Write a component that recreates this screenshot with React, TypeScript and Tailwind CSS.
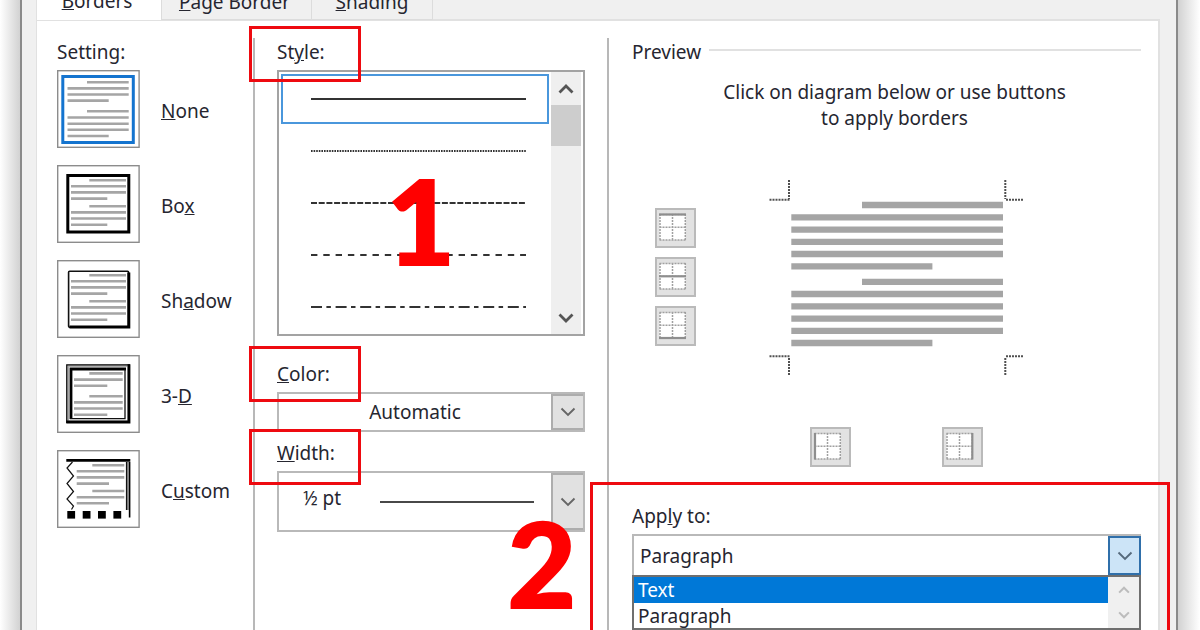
import type { ReactNode } from "react";

const RED = "border-[#ee0a10]";

// [kind, y] - R: indented, F: full width, L: short last line
type Line = ["R" | "F" | "L", number];

const noneLines: Line[] = [
  ["R", 12.3], ["F", 18.4], ["F", 24.5], ["L", 30.6], ["R", 41.3],
  ["F", 47.5], ["F", 53.7], ["F", 59.8], ["L", 66],
];
const boxLines: Line[] = [
  ["R", 15.2], ["F", 21.3], ["F", 27.4], ["L", 33.6],
  ["R", 41.3], ["F", 47.4], ["F", 53.5], ["L", 59.7],
];
const threeDLines: Line[] = [
  ["R", 18.4], ["F", 24.6], ["L", 30.7], ["R", 41.3],
  ["F", 47.4], ["F", 53.5], ["L", 59.7],
];
const customLines: Line[] = [
  ["R", 15.2], ["F", 21.3], ["F", 27.4], ["L", 33.6],
  ["R", 41], ["F", 47.2], ["L", 53.3],
];
const previewLines: Line[] = [
  ["R", 25], ["F", 37.3], ["F", 49.6], ["F", 61.8], ["F", 74], ["L", 86.3],
  ["R", 101.8], ["F", 114], ["F", 126.3], ["F", 138.6], ["F", 150.8], ["L", 163],
];

function TextLines({
  lines, left, right, indent, end, width,
}: {
  lines: Line[]; left: number; right: number; indent: number; end: number; width: number;
}) {
  return (
    <g stroke="#a5a5a5" strokeWidth={width}>
      {lines.map(([kind, y]) => (
        <line
          key={y}
          x1={kind === "R" ? indent : left}
          x2={kind === "L" ? end : right}
          y1={y}
          y2={y}
        />
      ))}
    </g>
  );
}

const settings: { id: string; label: ReactNode; art: ReactNode }[] = [
  {
    id: "none",
    label: <><u>N</u>one</>,
    art: (
      <>
        <rect x="5.8" y="6.5" width="70.5" height="66" fill="none" stroke="#1474cf" strokeWidth="3" />
        <TextLines lines={noneLines} left={10.5} right={71.7} indent={30} end={51.7} width={2.6} />
      </>
    ),
  },
  {
    id: "box",
    label: <>Bo<u>x</u></>,
    art: (
      <>
        <rect x="10.8" y="10.5" width="61" height="56.5" fill="none" stroke="#000" strokeWidth="3" />
        <TextLines lines={boxLines} left={14} right={69} indent={32.3} end={50.3} width={2.6} />
      </>
    ),
  },
  {
    id: "shadow",
    label: <>Sh<u>a</u>dow</>,
    art: (
      <>
        <rect x="11.6" y="11.2" width="60" height="56" rx="1" fill="none" stroke="#111" strokeWidth="1.6" />
        <path d="M12.5 67 H71.8 V12.5" fill="none" stroke="#000" strokeWidth="3" />
        <TextLines lines={boxLines} left={14} right={69} indent={32.3} end={50.3} width={2.6} />
      </>
    ),
  },
  {
    id: "three-d",
    label: <>3-<u>D</u></>,
    art: (
      <>
        <rect x="11.4" y="11.1" width="59.6" height="55.4" fill="none" stroke="#a8a8a8" strokeWidth="1.6" />
        <path d="M9.8 68 V9.8 H73" fill="none" stroke="#000" strokeWidth="1.3" />
        <path d="M9.3 67 H72 V9.3" fill="none" stroke="#000" strokeWidth="2.8" />
        <path d="M14 64 V14 H69" fill="none" stroke="#000" strokeWidth="2.8" />
        <path d="M13 63.7 H68 V14" fill="none" stroke="#111" strokeWidth="1.3" />
        <TextLines lines={threeDLines} left={17} right={65.7} indent={32.3} end={50.3} width={2.6} />
      </>
    ),
  },
  {
    id: "custom",
    label: <>C<u>u</u>stom</>,
    art: (
      <>
        <path d="M9.3 10.4 H73.3" stroke="#000" strokeWidth="2.8" />
        <path
          d="M15.5 12 L10 18 L16.5 26 L10 33.5 L16.5 41.5 L10 49 L16.5 56 L14.5 59.5"
          fill="none"
          stroke="#111"
          strokeWidth="1.2"
        />
        <path d="M71 12 V60" stroke="#a8a8a8" strokeWidth="2" />
        <path d="M69.6 12 V60" stroke="#111" strokeWidth="1.4" />
        <path d="M72.6 12 V67.5" stroke="#000" strokeWidth="1.6" />
        {[10.3, 25.7, 41, 56.4].map((x) => (
          <rect key={x} x={x} y="61" width="7.8" height="7.6" fill="#000" />
        ))}
        <TextLines lines={customLines} left={19.7} right={67.3} indent={35.3} end={52} width={2.6} />
      </>
    ),
  },
];

const lineStyles = [
  { name: "Single", dash: undefined },
  { name: "Dotted", dash: "1.6 1" },
  { name: "Dashed, small gap", dash: "6 1.7" },
  { name: "Dashed, large gap", dash: "6.4 5.9" },
  { name: "Dash dot", dash: "11 4.4 4.5 4.7" },
];

function Chevron({ up = false, bold = false, className }: { up?: boolean; bold?: boolean; className: string }) {
  return (
    <svg width="16" height="10" viewBox="0 0 16 10" className={className} aria-hidden="true">
      <path
        d={up ? "M1.5 8.5 L8 2 L14.5 8.5" : "M1.5 1.5 L8 8 L14.5 1.5"}
        fill="none"
        stroke="currentColor"
        strokeWidth={bold ? 2.8 : 1.9}
      />
    </svg>
  );
}

// Label with the red annotation frame around it
function MarkedLabel({
  htmlFor, id, frame, children,
}: {
  htmlFor?: string; id?: string; frame: string; children: ReactNode;
}) {
  return (
    <div className="relative mb-1">
      <label id={id} htmlFor={htmlFor}>{children}</label>
      <span className={`pointer-events-none absolute -left-7 z-10 h-14 w-28 border-[3px] ${RED} ${frame}`} />
    </div>
  );
}

type Side = "top" | "middle" | "bottom" | "left" | "right";

const sidePaths: Record<Side, string> = {
  top: "M4 6.5 H31",
  middle: "M4 19.3 H31",
  bottom: "M4 32 H31",
  left: "M5 6 V32.5",
  right: "M30.3 6 V32.5",
};

function BorderButton({ side }: { side: Side }) {
  return (
    <button
      type="button"
      aria-label={`${side} border`}
      className="block h-10 w-[41px] border-2 border-[#bababa] bg-[#e2e2e2]"
    >
      <svg width="41" height="40" viewBox="0 0 41 40" className="-m-[2px] max-w-none">
        <rect x="4.5" y="6.5" width="26" height="25.5" fill="#fff" />
        <path
          d="M4.5 6.5 H31 M4.5 19.3 H31 M4.5 32 H31 M5 6 V32.5 M17.5 6 V32.5 M30.3 6 V32.5"
          stroke="#a0a0a0"
          strokeWidth="1.5"
          strokeDasharray="2 1"
        />
        <path d={sidePaths[side]} stroke="#8e8e8e" strokeWidth="2.2" />
      </svg>
    </button>
  );
}

function PreviewDiagram() {
  return (
    <svg width="255" height="196" viewBox="0 0 255 196" role="img" aria-label="Border preview">
      <path
        d="M0.5 19.7 H21 M20 0 V19 M236.3 0 V19 M237 19.7 H254.5 M0.5 176.3 H21 M20 178 V196 M237 176.3 H254.5 M236.3 178 V196"
        stroke="#505050"
        strokeWidth="2"
        strokeDasharray="2 1"
      />
      <TextLines lines={previewLines} left={22.3} right={234} indent={93} end={163.4} width={6.3} />
    </svg>
  );
}

export default function App() {
  return (
    <main className="flex h-screen overflow-hidden bg-white font-['Noto_Sans','Open_Sans',sans-serif] text-[19px] leading-7 text-[#262630]">
      <div className="w-5 shrink-0 bg-linear-to-r from-white to-[#d2d2d2]" />

      <div className="flex min-w-0 flex-1 flex-col border-x-2 border-[#8a8a8a] bg-[#f0f0f0] pl-3.5 pr-4">
        <div role="tablist" className="z-10 -mt-4 -mb-px flex h-9 shrink-0">
          <button type="button" role="tab" aria-selected="true" className="w-[125px] border-l border-[#e1e1e1] bg-white pr-1 pb-0.5">
            <u>B</u>orders
          </button>
          <button type="button" role="tab" aria-selected="false" className="w-[151px] border-x border-b border-[#dcdcdc] pr-1">
            <u>P</u>age Border
          </button>
          <button type="button" role="tab" aria-selected="false" className="w-[121px] border-r border-b border-[#dcdcdc]">
            <u>S</u>hading
          </button>
        </div>

        <div className="flex flex-1 border-2 border-b-0 border-l border-[#e1e1e1] bg-white pt-[17px]">
          <section className="w-[216px] shrink-0 pl-5">
            <h2 className="mb-1">Setting:</h2>
            <div className="flex flex-col gap-[17px]">
              {settings.map((s) => (
                <button key={s.id} type="button" className="flex items-center gap-[21px] text-left">
                  <svg width="83" height="78" viewBox="0 0 83 78" aria-hidden="true">
                    <rect x="0.7" y="0.7" width="81.4" height="76.6" fill="#fff" stroke="#8c8c8c" strokeWidth="1.4" />
                    {s.art}
                  </svg>
                  <span className="pt-1">{s.label}</span>
                </button>
              ))}
            </div>
          </section>

          <section className="relative w-[354px] shrink-0 border-l-2 border-[#b8b8b8] px-[22px]">
            <MarkedLabel id="style-label" frame="-top-3">St<u>y</u>le:</MarkedLabel>
            <div className="flex h-[266px] border-2 border-[#a3a3a3]">
              <ul role="listbox" aria-labelledby="style-label" className="flex-1">
                {lineStyles.map((style, i) => (
                  <li key={style.name} role="option" aria-selected={i === 0} aria-label={style.name} className="h-[52px] p-0.5">
                    <div
                      className={
                        i === 0
                          ? "flex h-[50px] items-center border-2 border-[#4a97dc] pl-7 pr-[21px]"
                          : "flex h-[50px] items-center pl-[30px] pr-[23px]"
                      }
                    >
                      <svg className="w-full" height="2" aria-hidden="true">
                        <line x1="0" x2="100%" y1="1" y2="1" stroke="#333" strokeWidth="2" strokeDasharray={style.dash} />
                      </svg>
                    </div>
                  </li>
                ))}
              </ul>
              <div className="mr-0.5 flex w-[30px] flex-col items-center bg-[#efefef]">
                <Chevron up bold className="mt-3 shrink-0 text-[#555]" />
                <div className="mt-[11px] h-[41px] w-full bg-[#cdcdcd]" />
                <Chevron bold className="mt-auto mb-[11px] shrink-0 text-[#555]" />
              </div>
            </div>

            <div className="mt-6">
              <MarkedLabel htmlFor="color" frame="-top-3.5"><u>C</u>olor:</MarkedLabel>
              <div className="flex h-10 border-2 border-[#b9b9b9]">
                <select id="color" className="min-w-0 flex-1 appearance-none bg-white text-center">
                  <option>Automatic</option>
                </select>
                <span className="pointer-events-none flex w-8 items-center justify-center border-2 border-r-0 border-[#adadad] bg-[#e1e1e1]">
                  <Chevron className="text-[#666]" />
                </span>
              </div>
            </div>

            <div className="mt-[7px]">
              <MarkedLabel htmlFor="width" frame="-top-2.5"><u>W</u>idth:</MarkedLabel>
              <div className="flex h-[61px] border-2 border-[#b9b9b9]">
                <select id="width" className="w-[101px] appearance-none bg-white pb-2 pl-6">
                  <option>½ pt</option>
                </select>
                <span className="mr-[17px] h-0.5 flex-1 self-center bg-[#484848]" />
                <span className="pointer-events-none flex w-8 items-center justify-center border-2 border-r-0 border-[#adadad] bg-[#e1e1e1]">
                  <Chevron className="text-[#666]" />
                </span>
              </div>
            </div>

            <span className="pointer-events-none absolute left-[131px] top-[122px] font-['Lato',sans-serif] text-[120px] leading-none font-extrabold text-[#ff0000]">
              1
            </span>
            <span className="pointer-events-none absolute left-[252px] top-[465px] z-10 font-['Lato',sans-serif] text-[120px] leading-none font-extrabold text-[#ff0000]">
              2
            </span>
          </section>

          <section className="min-w-0 flex-1 border-l-2 border-[#b8b8b8] pl-[23px] pr-[17px]">
            <div className="flex items-center gap-2">
              <h2>Preview</h2>
              <hr className="mb-1 flex-1 border-t-2 border-[#e1e1e1]" />
            </div>
            <p className="mt-[13px] pl-4 text-center leading-[26px]">
              Click on diagram below or use buttons
              <br />
              to apply borders
            </p>

            <div className="mt-[49px] flex gap-[73px] pl-[23px]">
              <div className="flex flex-col gap-[9px] pt-7">
                <BorderButton side="top" />
                <BorderButton side="middle" />
                <BorderButton side="bottom" />
              </div>
              <PreviewDiagram />
            </div>
            <div className="mt-[51px] flex gap-[91px] pl-[178px]">
              <BorderButton side="left" />
              <BorderButton side="right" />
            </div>

            <div className="relative mt-[35px]">
              <label htmlFor="apply-to" className="mb-1 block">App<u>l</u>y to:</label>
              <div className="flex h-[41px] border-t-2 border-l-2 border-[#b9b9b9]">
                <select id="apply-to" className="min-w-0 flex-1 appearance-none bg-white pl-1.5">
                  <option>Paragraph</option>
                  <option>Text</option>
                </select>
                <span className="pointer-events-none flex w-[33px] items-center justify-center border-2 border-[#2f6faa] bg-[#cce4f7]">
                  <Chevron className="text-[#566a7c]" />
                </span>
              </div>
              <div className="flex h-[55px] border-2 border-[#6f6f6f] bg-white">
                <ul role="listbox" aria-label="Apply to" className="flex-1 leading-[26px]">
                  <li role="option" aria-selected="true" className="h-[26px] bg-[#0078d7] pl-1 text-white">Text</li>
                  <li role="option" aria-selected="false" className="h-[25px] pl-1">Paragraph</li>
                </ul>
                <div className="flex w-[31px] flex-col items-center justify-around bg-[#f0f0f0]">
                  <Chevron up bold className="w-3 text-[#bcbcbc]" />
                  <Chevron bold className="w-3 text-[#bcbcbc]" />
                </div>
              </div>
              <span className={`pointer-events-none absolute -left-[42px] -right-[29px] -top-5 h-[170px] border-[3px] ${RED}`} />
            </div>
          </section>
        </div>
      </div>

      <div className="w-[22px] shrink-0 bg-linear-to-r from-[#d2d2d2] to-white" />
    </main>
  );
}
